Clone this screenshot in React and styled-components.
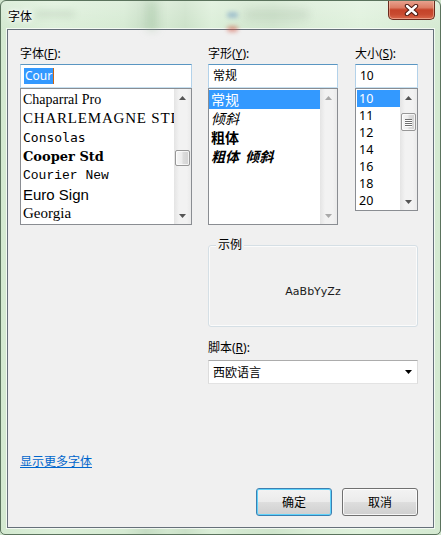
import React from 'react'
import styled, { createGlobalStyle } from 'styled-components'

const GlobalStyle = createGlobalStyle`
  html, body {
    margin: 0;
    padding: 0;
    width: 441px;
    height: 535px;
    overflow: hidden;
    background: #cfe4cc;
  }
  body {
    font-family: "Noto Sans", "Noto Sans CJK SC", sans-serif;
    font-size: 12px;
    color: #000;
  }
`

const fonts = [
  { name: 'Chaparral Pro', family: '"Liberation Serif", serif', size: 14 },
  { name: 'CHARLEMAGNE STD', family: '"Liberation Serif", serif', size: 15, spacing: 0.8 },
  { name: 'Consolas', family: '"DejaVu Sans Mono", monospace', size: 13 },
  { name: 'Cooper Std', family: '"DejaVu Serif", serif', size: 13, weight: 900 },
  { name: 'Courier New', family: '"Liberation Mono", monospace', size: 13 },
  { name: 'Euro Sign', family: '"Liberation Sans", sans-serif', size: 15 },
  { name: 'Georgia', family: '"Liberation Serif", serif', size: 15 },
]

const styles = [
  { name: '常规' },
  { name: '倾斜', italic: true },
  { name: '粗体', bold: true },
  { name: '粗体  倾斜', bold: true, italic: true },
]

const sizes = ['10', '11', '12', '14', '16', '18', '20']

const Window = styled.div`
  position: relative;
  width: 441px;
  height: 535px;
  box-sizing: border-box;
  border: 1px solid #5b735d;
  border-radius: 6px 6px 5px 5px;
  overflow: hidden;
  display: flex;
  flex-direction: column;
  background:
    linear-gradient(to bottom, rgba(255,255,255,0.25), rgba(255,255,255,0) 30px),
    linear-gradient(to right,
      #d3e9d0 0%, #dcefd9 12%, #d5eAd2 28%, #c6ddc4 33%, #d2e7cf 38%, #cbe1c8 42%,
      #dbeed8 48%, #d3e8d0 55%, #cfe5cc 62%, #d9ecd6 70%, #dff1dc 82%, #d4e9d1 100%);
`

const Haze = styled.span`
  position: absolute;
  left: ${p => p.$x}px;
  top: ${p => p.$y}px;
  width: ${p => p.$w}px;
  height: ${p => p.$h}px;
  background: ${p => p.$c};
  border-radius: 4px;
  filter: blur(${p => p.$b || 3}px);
`

const TitleBar = styled.div`
  position: relative;
  height: 28px;
  flex-shrink: 0;
  display: flex;
  align-items: flex-start;
`

const Title = styled.div`
  position: relative;
  margin: 7px 0 0 7px;
  font-family: "Noto Sans CJK SC", sans-serif;
  font-size: 12px;
  line-height: 16px;
  text-shadow: 0 0 5px #fff, 0 0 3px #fff, 0 0 8px #fff;
`

const CloseButton = styled.div`
  position: relative;
  margin: -1px 5px 0 auto;
  width: 47px;
  height: 20px;
  box-sizing: border-box;
  border: 1px solid #6a2a1e;
  border-top: none;
  border-radius: 0 0 5px 5px;
  background: linear-gradient(to bottom, #e9a794 0%, #dc7c64 40%, #c5432a 52%, #c84a30 75%, #d9684c 100%);
  box-shadow: inset 0 0 0 1px rgba(255, 220, 200, 0.45);
  display: flex;
  align-items: center;
  justify-content: center;
`

const Panel = styled.div`
  margin: 0 6px;
  height: 499px;
  box-sizing: border-box;
  border: 1px solid #66707a;
  background: #f0f0f0;
  box-shadow: 0 0 0 1px rgba(255, 255, 255, 0.7);
  padding: 16px 15px 11px 12px;
  display: flex;
  flex-direction: column;
`

const TopRow = styled.div`
  display: flex;
  gap: 16px;
`

const Column = styled.div`
  width: ${p => p.$w}px;
  margin-left: ${p => p.$ml || 0}px;
  display: flex;
  flex-direction: column;
`

const Label = styled.div`
  font-size: 12px;
  line-height: 16px;
  height: 16px;
  margin-bottom: ${p => p.$mb ?? 2}px;

  u {
    text-decoration: underline;
    text-underline-offset: 1px;
  }
`

const TextBox = styled.div`
  height: 24px;
  box-sizing: border-box;
  border: 1px solid;
  border-color: #5a96c2 #b3d2ea #c6e0f1 #b3d2ea;
  background: #fff;
  padding: 0 ${p => p.$pl || 4}px;
  display: flex;
  align-items: center;
  font-size: 12px;
  line-height: 16px;
`

const Selection = styled.span`
  background: #3399ff;
  color: #fff;
  line-height: 16px;
  padding: 0 1px;
`

const Caret = styled.span`
  width: 1px;
  height: 16px;
  background: #cc6611;
`

const ListBox = styled.div`
  height: ${p => p.$h}px;
  box-sizing: border-box;
  border: 1px solid #8a8d92;
  background: #fff;
  display: flex;
`

const Items = styled.div`
  flex: 1;
  min-width: 0;
  padding: 1px 0 0 ${p => p.$pl || 0}px;
  overflow: hidden;
`

const Item = styled.div`
  height: ${p => p.$h}px;
  line-height: ${p => p.$h}px;
  padding-left: 2px;
  white-space: pre;
  overflow: hidden;
  font-family: ${p => p.$family || '"Noto Sans", "Noto Sans CJK SC", sans-serif'};
  font-size: ${p => p.$size || 14}px;
  font-weight: ${p => p.$weight || 400};
  font-style: ${p => (p.$italic ? 'italic' : 'normal')};
  letter-spacing: ${p => p.$spacing || 0}px;
  background: ${p => (p.$selected ? '#3399ff' : 'transparent')};
  color: ${p => (p.$selected ? '#fff' : '#000')};
`

const ScrollTrack = styled.div`
  width: 17px;
  flex-shrink: 0;
  display: flex;
  flex-direction: column;
  background: linear-gradient(to right, #e4e4e4, #f2f2f2 30%, #f2f2f2 75%, #eaeaea);
`

const ArrowCell = styled.div`
  height: 17px;
  flex-shrink: 0;
  display: flex;
  align-items: center;
  justify-content: center;
`

const Filler = styled.div`
  flex: 1;
`

const Thumb = styled.div`
  margin: ${p => p.$top}px 1px 0;
  height: ${p => p.$h}px;
  box-sizing: border-box;
  border: 1px solid #979797;
  border-radius: 2px;
  background: linear-gradient(to right, #f6f6f6, #ececec 45%, #dcdcdc 55%, #d2d2d2);
  box-shadow: inset 0 0 0 1px rgba(255, 255, 255, 0.7);
  display: flex;
  flex-direction: column;
  align-items: center;
  justify-content: center;
  gap: 1px;
`

const Grip = styled.span`
  width: 7px;
  height: 1px;
  background: #6f6f6f;
  box-shadow: 0 1px 0 #fff;
`

const Lower = styled.div`
  margin-left: 188px;
  width: 210px;
  display: flex;
  flex-direction: column;
`

const GroupBox = styled.div`
  position: relative;
  margin-top: 20px;
  height: 82px;
  box-sizing: border-box;
  border: 1px solid #d5dfe5;
  border-radius: 3px;
  box-shadow: inset 0 0 0 1px #fbfbfb;
  padding-top: 11px;
  display: flex;
  align-items: center;
  justify-content: center;
`

const Legend = styled.span`
  position: absolute;
  top: -8px;
  left: 7px;
  padding: 0 2px;
  background: #f0f0f0;
  font-size: 12px;
  line-height: 14px;
`

const Sample = styled.span`
  font-family: "DejaVu Sans", sans-serif;
  font-size: 11px;
  color: #1a1a1a;
`

const ScriptLabel = styled(Label)`
  margin-top: 13px;
`

const Dropdown = styled.div`
  height: 24px;
  box-sizing: border-box;
  border: 1px solid;
  border-color: #acacac #dcdcdc #e3e3e3 #dcdcdc;
  background: #fff;
  padding: 0 5px 0 4px;
  display: flex;
  align-items: center;
  justify-content: space-between;
  font-size: 12px;
`

const Footer = styled.div`
  margin-top: auto;
  display: flex;
  flex-direction: column;
`

const MoreLink = styled.a`
  align-self: flex-start;
  color: #0066cc;
  text-decoration: underline;
  font-size: 12px;
  line-height: 16px;
  margin-bottom: 18px;
  cursor: pointer;
`

const ButtonRow = styled.div`
  display: flex;
  justify-content: flex-end;
  gap: 10px;
`

const Button = styled.div`
  width: 76px;
  height: 28px;
  box-sizing: border-box;
  border: 1px solid ${p => (p.$primary ? '#3c7fb1' : '#707070')};
  border-radius: 3px;
  background: linear-gradient(to bottom, #f3f3f3 0%, #ebebeb 48%, #dddddd 52%, #cfcfcf 100%);
  box-shadow: inset 0 0 0 1px ${p => (p.$primary ? '#5fd3fb' : 'rgba(255,255,255,0.8)')};
  display: flex;
  align-items: center;
  justify-content: center;
  font-size: 12px;
`

const Tri = ({ down, color = '#555' }) => (
  <svg width="7" height="4" viewBox="0 0 7 4">
    <path d={down ? 'M0 0 L7 0 L3.5 4 Z' : 'M0 4 L7 4 L3.5 0 Z'} fill={color} />
  </svg>
)

const ScrollBar = ({ thumbTop, thumbH, grip, disabled }) => {
  const c = disabled ? '#a9a9a9' : '#555'
  return (
    <ScrollTrack>
      <ArrowCell><Tri color={c} /></ArrowCell>
      {thumbH ? (
        <Thumb $top={thumbTop} $h={thumbH}>
          {grip && <><Grip /><Grip /><Grip /><Grip /></>}
        </Thumb>
      ) : null}
      <Filler />
      <ArrowCell><Tri down color={c} /></ArrowCell>
    </ScrollTrack>
  )
}

const CloseGlyph = () => (
  <svg width="15" height="12" viewBox="0 0 15 12">
    <path d="M3 2 L12 10 M12 2 L3 10" stroke="#4a1a12" strokeWidth="4.4" strokeLinecap="round" />
    <path d="M3 2 L12 10 M12 2 L3 10" stroke="#fff" strokeWidth="2.4" strokeLinecap="round" />
  </svg>
)

export default function App() {
  return (
    <>
      <GlobalStyle />
      <Window>
        <Haze $x={34} $y={9} $w={40} $h={8} $c="rgba(120,150,120,0.14)" $b={3} />
        <Haze $x={146} $y={0} $w={10} $h={30} $c="rgba(150,185,148,0.35)" $b={4} />
        <Haze $x={226} $y={11} $w={11} $h={6} $c="rgba(90,140,190,0.45)" $b={2} />
        <Haze $x={226} $y={25} $w={11} $h={6} $c="rgba(210,80,60,0.5)" $b={2} />
        <Haze $x={244} $y={9} $w={64} $h={9} $c="rgba(110,130,110,0.16)" $b={4} />
        <TitleBar>
          <Title>字体</Title>
          <CloseButton><CloseGlyph /></CloseButton>
        </TitleBar>

        <Panel>
          <TopRow>
            <Column $w={172}>
              <Label>字体(<u>F</u>):</Label>
              <TextBox $pl={3}>
                <Selection>Cour</Selection>
                <Caret />
              </TextBox>
              <ListBox $h={137}>
                <Items>
                  {fonts.map(f => (
                    <Item
                      key={f.name}
                      $h={19}
                      $family={f.family}
                      $size={f.size}
                      $weight={f.weight}
                      $spacing={f.spacing}
                    >
                      {f.name}
                    </Item>
                  ))}
                </Items>
                <ScrollBar thumbTop={44} thumbH={16} />
              </ListBox>
            </Column>

            <Column $w={130}>
              <Label>字形(<u>Y</u>):</Label>
              <TextBox>常规</TextBox>
              <ListBox $h={137}>
                <Items>
                  {styles.map((s, i) => (
                    <Item
                      key={s.name}
                      $h={19}
                      $family='"Noto Sans CJK SC", sans-serif'
                      $size={14}
                      $weight={s.bold ? 700 : 400}
                      $italic={s.italic}
                      $selected={i === 0}
                    >
                      {s.name}
                    </Item>
                  ))}
                </Items>
                <ScrollBar disabled />
              </ListBox>
            </Column>

            <Column $w={63} $ml={1}>
              <Label>大小(<u>S</u>):</Label>
              <TextBox>10</TextBox>
              <ListBox $h={123}>
                <Items $pl={1}>
                  {sizes.map((s, i) => (
                    <Item key={s} $h={17} $size={12.5} $selected={i === 0}>
                      {s}
                    </Item>
                  ))}
                </Items>
                <ScrollBar thumbTop={7} thumbH={18} grip />
              </ListBox>
            </Column>
          </TopRow>

          <Lower>
            <GroupBox>
              <Legend>示例</Legend>
              <Sample>AaBbYyZz</Sample>
            </GroupBox>
            <ScriptLabel $mb={4}>脚本(<u>R</u>):</ScriptLabel>
            <Dropdown>
              <span>西欧语言</span>
              <Tri down color="#000" />
            </Dropdown>
          </Lower>

          <Footer>
            <MoreLink>显示更多字体</MoreLink>
            <ButtonRow>
              <Button $primary>确定</Button>
              <Button>取消</Button>
            </ButtonRow>
          </Footer>
        </Panel>
      </Window>
    </>
  )
}
